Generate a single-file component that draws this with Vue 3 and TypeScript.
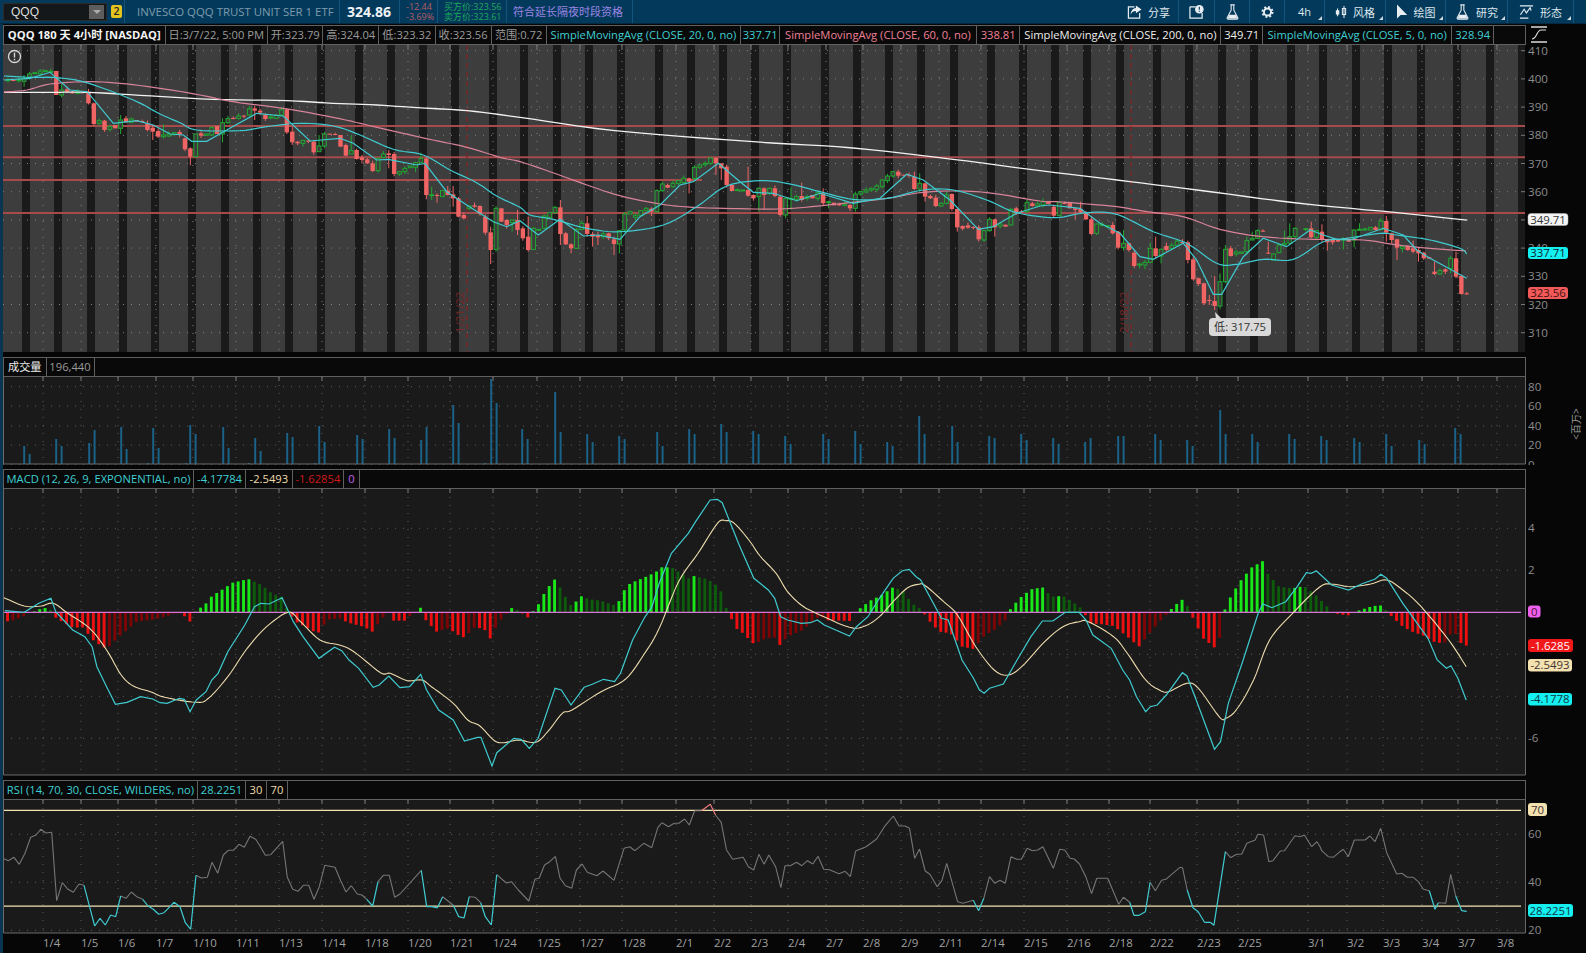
<script setup lang="ts">
type P = [number, number]
type T = { sx: number; ox: number; sy: number; oy: number }

const z7: T = { sx: 1 / 3, ox: 0, sy: 1 / 3, oy: 60 }
const z8: T = { sx: 1 / 3, ox: 520, sy: 1 / 3, oy: 130 }
const z9: T = { sx: 1 / 3, ox: 1030, sy: 1 / 3, oy: 180 }
const z10: T = { sx: 1 / 2.063, ox: 0, sy: 1 / 3, oy: 490 }
const z11: T = { sx: 1 / 2.178, ox: 760, sy: 1 / 3, oy: 490 }
const z5: T = { sx: 1 / 3, ox: 0, sy: 1 / 3, oy: 760 }
const z12: T = { sx: 1 / 1.912, ox: 500, sy: 1 / 3, oy: 795 }
const z6: T = { sx: 1 / 3, ox: 1300, sy: 1 / 3, oy: 600 }

function trace(parts: [number[], T][]): P[] {
  const out: P[] = []
  for (const [a, t] of parts) {
    for (let i = 0; i + 1 < a.length; i += 2) {
      const x = a[i] * t.sx + t.ox
      const y = a[i + 1] * t.sy + t.oy
      if (!out.length || x > out[out.length - 1][0]) out.push([x, y])
    }
  }
  return out
}
const toPts = (p: P[]) => p.map(([x, y]) => `${x.toFixed(1)},${y.toFixed(1)}`).join(' ')

// Catmull-Rom resampling for the slow averages, which are smooth curves on the chart.
function smooth(p: P[]): P[] {
  const out: P[] = []
  for (let i = 0; i < p.length - 1; i++) {
    const a = p[Math.max(i - 1, 0)]
    const b = p[i]
    const c = p[i + 1]
    const d = p[Math.min(i + 2, p.length - 1)]
    for (let s = 0; s < 6; s++) {
      const t = s / 6
      const t2 = t * t
      const t3 = t2 * t
      const f = (k: 0 | 1) =>
        0.5 * (2 * b[k] + (c[k] - a[k]) * t + (2 * a[k] - 5 * b[k] + 4 * c[k] - d[k]) * t2 + (3 * b[k] - a[k] - 3 * c[k] + d[k]) * t3)
      out.push([f(0), f(1)])
    }
  }
  out.push(p[p.length - 1])
  return out
}

function interp(k: P[], x: number): number {
  if (x <= k[0][0]) return k[0][1]
  for (let i = 1; i < k.length; i++) {
    if (x <= k[i][0]) {
      const f = (x - k[i - 1][0]) / (k[i][0] - k[i - 1][0])
      return k[i - 1][1] + f * (k[i][1] - k[i - 1][1])
    }
  }
  return k[k.length - 1][1]
}

const stripes = [22, 54, 87, 119, 151, 188, 221, 253, 285, 317, 355, 387, 419, 451, 489, 520, 553, 585, 617, 655, 687, 719, 751, 783, 821, 853, 885, 917, 950, 987, 1019, 1051, 1083, 1116, 1153, 1185, 1218, 1250, 1287, 1319, 1352, 1384, 1417, 1453, 1486]

const ticks: [number, string][] = [[43, '1/4'], [81, '1/5'], [118, '1/6'], [156, '1/7'], [193, '1/10'], [236, '1/11'], [279, '1/13'], [322, '1/14'], [365, '1/18'], [408, '1/20'], [450, '1/21'], [493, '1/24'], [537, '1/25'], [580, '1/27'], [622, '1/28'], [676, '2/1'], [714, '2/2'], [751, '2/3'], [788, '2/4'], [826, '2/7'], [863, '2/8'], [901, '2/9'], [939, '2/11'], [981, '2/14'], [1024, '2/15'], [1067, '2/16'], [1109, '2/18'], [1150, '2/22'], [1197, '2/23'], [1238, '2/25'], [1308, '3/1'], [1347, '3/2'], [1383, '3/3'], [1422, '3/4'], [1458, '3/7'], [1497, '3/8']]

// ---- price pane ----
const priceY = (p: number) => 50.7 + (410 - p) * 2.82
const priceLabels = [410, 400, 390, 380, 370, 360, 340, 330, 320, 310]
const priceGrid = [410, 400, 390, 380, 370, 360, 350, 340, 330, 320, 310].map(priceY)

const abs: T = { sx: 1, ox: 0, sy: 1, oy: 0 }
const white = trace([[[4, 92.3, 53, 92.3, 87, 92.3, 140, 95.3, 213, 99.3, 287, 100.7, 333, 103.3, 377, 105, 417, 107.7, 467, 110.7, 520, 117.3, 615, 130.7, 753, 141.7, 853, 148, 953, 159.3, 1040, 170.7, 1117, 180, 1197, 190, 1297, 203, 1397, 212.7, 1467, 220.2], abs]])
const pink = trace([[[4, 92, 27, 90, 50, 84, 87, 81.7, 120, 83.3, 160, 88.3, 200, 95, 233, 101.7, 283, 108.3, 333, 117.3, 367, 125, 400, 132.7, 433, 140, 467, 147.3, 500, 157.3, 520, 161.7, 550, 171.7, 587, 185, 620, 195.7, 660, 204, 693, 207.3, 740, 208.7, 787, 208.7, 837, 204, 887, 198.3, 923, 192.3, 960, 191, 993, 193.3, 1040, 201, 1057, 201.7, 1087, 204, 1117, 206.7, 1147, 211.7, 1183, 216.7, 1220, 229.3, 1263, 236.7, 1313, 239.3, 1363, 240, 1397, 245, 1430, 248.3, 1466, 251], abs]])
const sma20 = trace([
  [[12, 48, 90, 52, 170, 53, 260, 68, 400, 120, 480, 162, 540, 188, 590, 210, 720, 212, 800, 200, 900, 190, 1000, 198, 1080, 225, 1180, 268, 1270, 285, 1350, 330, 1430, 368, 1490, 408, 1560, 442], z7],
  [[30, 255, 100, 268, 200, 295, 300, 305, 430, 285, 530, 230, 620, 168, 720, 152, 800, 160, 900, 185, 1000, 208, 1100, 205, 1210, 180, 1300, 180, 1400, 210, 1480, 245, 1560, 260], z8],
  [[90, 112, 170, 98, 260, 103, 370, 155, 470, 190, 560, 250, 620, 253, 700, 238, 790, 238, 880, 185, 950, 175, 1050, 160, 1100, 165, 1200, 180, 1290, 205, 1310, 222], z9],
])
const sma5 = trace([
  [[12, 60, 90, 55, 150, 37, 210, 90, 262, 95, 340, 190, 410, 182, 460, 195, 510, 222, 550, 225, 575, 244, 620, 244, 680, 210, 770, 160, 850, 168, 930, 243, 1020, 235, 1060, 250, 1130, 300, 1165, 298, 1250, 315, 1275, 310, 1340, 395, 1400, 435, 1480, 485, 1520, 500, 1560, 482], z7],
  [[55, 315, 120, 268, 190, 318, 235, 315, 300, 328, 360, 260, 420, 225, 480, 165, 520, 155, 595, 100, 660, 155, 700, 187, 760, 190, 830, 212, 900, 190, 1000, 220, 1080, 205, 1160, 133, 1210, 150, 1290, 210, 1375, 298, 1420, 290, 1490, 250, 1560, 228], z8],
  [[60, 75, 150, 85, 210, 130, 270, 160, 330, 230, 370, 238, 460, 190, 500, 240, 550, 343, 575, 343, 640, 230, 700, 175, 770, 200, 840, 150, 880, 165, 920, 178, 960, 180, 1060, 145, 1120, 165, 1160, 210, 1200, 235, 1250, 262, 1310, 295], z9],
])
const maLines = [
  { pts: toPts(smooth(white)), color: '#f2f2f2', w: 1.3 },
  { pts: toPts(smooth(pink)), color: '#d8839a', w: 1.2 },
  { pts: toPts(smooth(sma20)), color: '#3fcbd0', w: 1.2 },
  { pts: toPts(sma5), color: '#3fcbd0', w: 1.2 },
]

const c7: number[][] = [[24, 60, 59], [40, 60, 60], [56, 60, 59], [74, 64, 56, 45, 80], [90, 52, 42], [106, 41, 38], [122, 41, 33], [138, 33, 32], [154, 36, 34, 26], [170, 33, 105], [186, 105, 90, 72, 112], [202, 88, 95], [218, 97, 99], [234, 100, 96], [250, 95, 96], [266, 95, 130], [282, 130, 192], [298, 190, 182], [314, 182, 210], [330, 208, 200], [346, 195, 205], [362, 205, 180, 165, 222], [378, 175, 187, 168], [394, 187, 177], [410, 180, 185], [426, 183, 186], [442, 190, 210], [458, 203, 215, 195, 240], [474, 213, 230], [490, 230, 225, 193], [506, 228, 222], [522, 223, 218], [538, 216, 225], [554, 235, 268], [570, 265, 290, 262, 316], [586, 290, 222], [602, 220, 227], [618, 226, 222], [634, 225, 203], [650, 198, 222], [666, 222, 188, 175, 247], [682, 188, 176], [698, 174, 176], [714, 175, 168], [730, 167, 169], [746, 165, 147], [762, 145, 152, 138, 180], [778, 152, 158], [795, 163, 177], [812, 174, 171], [830, 175, 166], [846, 165, 150], [862, 148, 217, 146, 222], [878, 215, 247, 200, 255], [894, 245, 250], [910, 250, 241, 240, 260], [926, 242, 244], [942, 245, 277, 240, 284], [958, 275, 258, 225], [974, 258, 222], [990, 221, 223], [1006, 222, 224], [1022, 225, 260], [1038, 255, 287], [1055, 282, 272, 225], [1071, 270, 297], [1087, 292, 300, 285, 310], [1103, 298, 310], [1119, 310, 333], [1135, 332, 295], [1151, 292, 282], [1167, 280, 285, 270, 325], [1183, 282, 342], [1199, 342, 335], [1215, 335, 325], [1231, 323, 318], [1247, 322, 308, 305, 336], [1263, 308, 295, 278], [1280, 295, 405, 292, 418], [1296, 405, 404, 380, 420], [1312, 405, 408, 400, 428], [1328, 410, 392], [1344, 392, 405, 378], [1360, 403, 415, 378, 440], [1376, 415, 470], [1392, 465, 475], [1408, 445, 438], [1424, 436, 440], [1440, 438, 462], [1456, 470, 518], [1472, 517, 570, 500, 612], [1488, 568, 445], [1504, 445, 485], [1520, 480, 495, 478, 506], [1536, 488, 480, 478, 515], [1552, 480, 510, 450, 525]]
const c8: number[][] = [[8, 295, 325], [24, 320, 360, 260, 365], [40, 358, 295], [56, 300, 298], [72, 295, 258], [89, 262, 248], [105, 248, 232], [122, 232, 312, 210, 345], [138, 310, 343], [154, 343, 355, 340, 370], [170, 355, 298], [186, 298, 280], [202, 280, 312, 258, 320], [218, 312, 320, 305, 350], [234, 316, 322, 305, 345], [250, 320, 312], [266, 310, 325], [282, 328, 342, 320, 375], [298, 342, 302, 300, 370], [314, 300, 252], [330, 252, 245], [347, 262, 256], [363, 256, 242], [379, 242, 235], [395, 236, 245, 232, 258], [411, 245, 182], [427, 182, 162], [443, 165, 173], [459, 170, 160], [475, 160, 152], [491, 158, 145], [507, 145, 155, 143, 190], [523, 145, 112], [539, 112, 105], [555, 104, 100], [572, 100, 84], [588, 84, 100, 82, 135], [604, 100, 115, 100, 150], [620, 110, 165], [636, 165, 183], [652, 181, 179], [668, 181, 180], [684, 180, 197, 110, 200], [700, 195, 205, 193, 212], [716, 200, 175, 172, 245], [732, 175, 195, 172, 238], [748, 190, 175], [764, 175, 198], [780, 200, 255], [796, 255, 205, 203, 265], [812, 206, 205, 172, 240], [828, 208, 200], [845, 198, 210, 158, 215], [861, 205, 200], [877, 195, 205], [893, 205, 188], [909, 190, 220, 175, 225], [925, 218, 215, 212, 235], [941, 218, 226], [957, 222, 226], [973, 226, 222], [989, 225, 235, 222, 242], [1005, 235, 192, 185, 245], [1021, 192, 185], [1037, 186, 180], [1053, 180, 175], [1069, 178, 168], [1086, 170, 150], [1102, 152, 138], [1118, 138, 125], [1134, 125, 137], [1150, 134, 136], [1166, 134, 136], [1182, 140, 177, 125, 180], [1198, 177, 160, 130, 185], [1214, 160, 200, 158, 215], [1230, 198, 205], [1246, 203, 228], [1262, 228, 220], [1278, 220, 195], [1294, 192, 237], [1311, 237, 292, 235, 305], [1327, 288, 296], [1343, 286, 293], [1359, 291, 293], [1375, 292, 328], [1391, 330, 302, 300, 335], [1407, 302, 268, 262, 305], [1423, 268, 292, 266, 320], [1439, 288, 282], [1455, 284, 290], [1471, 285, 238], [1487, 235, 248, 230, 255], [1503, 244, 246], [1519, 245, 218], [1535, 220, 228], [1552, 228, 222]]
const c9: number[][] = [[39, 75, 65, 55], [55, 65, 72], [71, 80, 107], [87, 107, 67], [103, 69, 71], [119, 68, 85], [135, 85, 90, 83, 118], [151, 87, 97, 65, 100], [167, 97, 118], [183, 118, 162], [199, 160, 132], [215, 136, 133], [231, 139, 137], [248, 135, 160], [264, 155, 203], [280, 203, 190, 150, 212], [296, 190, 210], [312, 218, 258], [328, 255, 252, 248, 265], [344, 255, 247, 240, 268], [360, 247, 205, 188], [376, 205, 228, 170, 235], [392, 228, 208, 205, 250], [408, 198, 210, 188, 215], [424, 205, 196], [440, 196, 183], [456, 186, 188], [473, 187, 240, 182, 250], [489, 238, 298], [505, 295, 312], [521, 310, 370, 308, 375], [537, 360, 362, 345, 375], [553, 363, 378, 288, 390], [569, 378, 305, 280, 388], [585, 305, 208, 195, 310], [601, 205, 228, 198, 230], [617, 222, 216], [633, 220, 216], [650, 215, 182, 170, 225], [666, 180, 175, 155], [682, 175, 152], [698, 152, 155, 148, 156], [714, 218, 220, 185, 222], [730, 240, 222, 220, 240], [746, 218, 195], [762, 195, 190, 152, 200], [778, 190, 170, 130, 195], [794, 170, 145, 142, 175], [826, 148, 146], [842, 145, 172, 125, 175], [858, 172, 152], [874, 155, 180, 133, 185], [890, 180, 187, 178, 212], [906, 180, 187], [922, 180, 185], [938, 180, 176, 172, 208], [954, 176, 185], [971, 180, 150, 148, 202], [987, 150, 148, 130], [1003, 150, 147], [1019, 150, 142], [1035, 142, 150, 138], [1051, 148, 123], [1067, 123, 158, 108, 185], [1083, 160, 180, 158, 190], [1099, 178, 203, 176, 240], [1115, 205, 200, 198, 218], [1131, 198, 210, 195, 212], [1147, 205, 215, 182, 220], [1163, 210, 220, 205, 245], [1179, 218, 235, 215, 240], [1195, 232, 236], [1211, 275, 282, 245, 285], [1228, 282, 272, 265, 285], [1244, 268, 275, 265, 282], [1260, 265, 235, 228, 280], [1276, 235, 290, 215, 295], [1292, 288, 342, 285, 344], [1308, 340, 343]]

const step = 5.363
const candles = ([[c7, z7], [c8, z8], [c9, z9]] as [number[][], T][]).flatMap(([list, t]) =>
  list.map((r, n) => {
    const raw = r[0] * t.sx + t.ox
    const x = 8 + Math.round((raw - 8) / step) * step
    const o = r[1] * t.sy + t.oy
    const c = r[2] * t.sy + t.oy
    const top = Math.min(o, c)
    const bot = Math.max(o, c)
    const seed = (n * 7 + Math.round(raw)) % 5
    const hi = r[3] !== undefined ? r[3] * t.sy + t.oy : top - seed * 0.7
    const lo = r[4] !== undefined ? r[4] * t.sy + t.oy : bot + ((seed * 3) % 5) * 0.6
    return { x, top, h: Math.max(bot - top, 1), hi, lo, up: c < o }
  }),
)

// ---- volume pane ----
const volPairs = [[18, 10], [25, 18], [21, 34], [37, 15], [36, 16], [39, 30], [37, 16], [26, 13], [31, 27], [38, 22], [29, 25], [35, 26], [24, 37], [59, 41], [85, 61], [35, 25], [72, 32], [30, 22], [28, 25], [32, 18], [35, 30], [40, 32], [33, 30], [28, 20], [30, 25], [33, 20], [22, 18], [48, 30], [38, 22], [28, 26], [30, 24], [26, 20], [22, 26], [28, 28], [30, 24], [24, 18], [54, 30], [30, 22], [30, 25], [28, 24], [26, 22], [30, 18], [24, 20], [36, 30]]
const volBars = volPairs.flatMap((p, i) => [
  { x: stripes[i] + 1.2, h: p[0] },
  { x: stripes[i] + 6.6, h: p[1] },
])
const volTiny = [147, 185, 248, 314, 484]
const volGrid: [number, string][] = [[386.7, '80'], [406, '60'], [426, '40'], [445, '20'], [464.6, '0']]

// ---- MACD pane ----
const macdGrid: [number, string][] = [[528.3, '4'], [570.3, '2'], [654.3, ''], [696.3, ''], [738.3, '-6']]
const macd = trace([
  [[10, 362, 50, 367, 80, 340, 105, 325, 115, 365, 150, 420, 175, 440, 190, 470, 200, 530, 220, 590, 238, 643, 262, 637, 290, 620, 315, 627, 330, 638, 345, 640, 370, 625, 380, 628, 392, 665, 405, 630, 425, 605, 437, 570, 450, 550, 470, 485, 505, 405, 525, 350, 538, 340, 555, 342, 582, 323, 605, 395, 625, 440, 658, 505, 690, 472, 705, 482, 720, 510, 740, 535, 770, 592, 782, 585, 802, 558, 825, 593, 845, 590, 868, 553, 880, 600, 905, 660, 935, 690, 958, 753, 985, 742, 992, 742, 1015, 828, 1025, 788, 1060, 745, 1075, 748, 1092, 775, 1110, 745, 1145, 595, 1158, 600, 1178, 645, 1205, 592, 1222, 583, 1245, 568, 1268, 575, 1280, 550, 1305, 450, 1330, 382, 1345, 350, 1360, 280, 1385, 190, 1420, 130, 1435, 95, 1465, 30, 1480, 28, 1490, 38, 1525, 165, 1555, 265, 1568, 280], z10],
  [[18, 300, 32, 325, 45, 380, 60, 390, 90, 400, 110, 398, 125, 390, 140, 405, 195, 438, 210, 410, 235, 380, 260, 325, 290, 265, 310, 242, 325, 238, 340, 260, 350, 270, 395, 385, 410, 390, 440, 510, 465, 565, 478, 600, 488, 610, 500, 595, 530, 582, 560, 510, 590, 440, 615, 393, 638, 393, 665, 367, 695, 367, 710, 390, 725, 435, 765, 475, 790, 540, 805, 570, 820, 620, 840, 665, 850, 650, 865, 645, 885, 615, 920, 548, 930, 558, 950, 630, 990, 778, 1003, 755, 1020, 640, 1050, 520, 1085, 370, 1095, 342, 1115, 353, 1145, 335, 1170, 290, 1190, 248, 1200, 250, 1212, 243, 1245, 285, 1282, 300, 1310, 282, 1340, 267, 1352, 253, 1365, 265, 1400, 340, 1455, 445, 1475, 510, 1495, 535, 1505, 527, 1520, 565, 1538, 630], z11],
])
const signal = trace([
  [[8, 323, 50, 348, 85, 348, 110, 340, 140, 370, 185, 415, 220, 480, 250, 555, 275, 588, 310, 605, 340, 622, 405, 637, 430, 625, 470, 560, 510, 475, 550, 410, 595, 367, 620, 395, 660, 450, 700, 465, 730, 485, 785, 548, 805, 550, 840, 572, 870, 570, 890, 590, 935, 640, 965, 690, 990, 708, 1020, 752, 1040, 758, 1070, 750, 1105, 757, 1130, 725, 1160, 670, 1180, 660, 1240, 605, 1290, 568, 1330, 490, 1360, 415, 1400, 275, 1440, 190, 1480, 100, 1497, 92, 1515, 100, 1545, 150, 1568, 198], z10],
  [[35, 250, 60, 305, 90, 345, 120, 368, 195, 412, 230, 407, 260, 380, 290, 335, 320, 295, 345, 283, 360, 287, 400, 335, 430, 375, 470, 470, 510, 540, 540, 555, 570, 530, 620, 455, 660, 410, 695, 395, 715, 395, 770, 440, 800, 490, 840, 570, 870, 600, 890, 605, 930, 580, 955, 595, 1000, 680, 1015, 685, 1040, 655, 1075, 570, 1110, 450, 1160, 370, 1220, 290, 1250, 283, 1285, 290, 1330, 282, 1365, 270, 1400, 300, 1440, 350, 1500, 450, 1538, 530], z11],
])
const macdPts = toPts(macd)
const signalPts = toPts(smooth(signal))
const histKnots = trace([
  [[10, 395, 30, 390, 50, 378, 60, 367, 70, 365, 80, 358, 100, 352, 108, 367, 115, 383, 128, 395, 150, 413, 170, 412, 195, 455, 220, 477, 245, 440, 262, 420, 282, 395, 320, 388, 345, 378, 365, 367, 380, 378, 392, 395, 400, 368, 412, 355, 425, 340, 437, 318, 457, 300, 480, 278, 512, 267, 540, 285, 560, 310, 580, 320, 595, 367, 610, 395, 640, 418, 655, 432, 675, 390, 700, 385, 718, 398, 750, 410, 768, 425, 785, 390, 800, 367, 812, 392, 835, 392, 850, 372, 862, 367, 867, 352, 878, 390, 900, 425, 925, 415, 945, 435, 958, 443, 980, 410, 1000, 420, 1012, 447, 1025, 405, 1040, 375, 1050, 367, 1055, 354, 1065, 358, 1075, 367, 1088, 383, 1098, 367, 1110, 345, 1120, 316, 1133, 288, 1145, 267, 1155, 292, 1168, 325, 1178, 347, 1188, 335, 1200, 318, 1215, 328, 1240, 332, 1265, 345, 1277, 333, 1288, 300, 1300, 280, 1330, 262, 1352, 247, 1365, 232, 1385, 232, 1410, 255, 1420, 265, 1432, 258, 1460, 268, 1477, 285, 1490, 310, 1497, 352, 1505, 367, 1510, 392, 1520, 417, 1535, 432, 1552, 460, 1568, 455], z10],
  [[8, 448, 30, 440, 43, 465, 60, 440, 90, 422, 110, 400, 130, 378, 150, 392, 170, 392, 195, 393, 205, 367, 215, 358, 240, 332, 265, 315, 288, 293, 310, 300, 330, 340, 345, 352, 355, 367, 370, 395, 390, 425, 415, 430, 440, 470, 465, 477, 490, 435, 510, 420, 535, 390, 542, 367, 545, 358, 565, 325, 590, 298, 615, 292, 635, 320, 660, 318, 680, 335, 700, 355, 705, 367, 720, 400, 745, 403, 770, 408, 800, 440, 825, 470, 845, 435, 870, 395, 890, 367, 895, 358, 918, 328, 930, 345, 935, 367, 942, 382, 965, 445, 990, 473, 1003, 438, 1005, 367, 1012, 360, 1025, 320, 1045, 275, 1070, 233, 1095, 213, 1105, 250, 1130, 290, 1160, 295, 1185, 288, 1210, 315, 1235, 350, 1240, 367, 1280, 377, 1290, 367, 1303, 362, 1330, 350, 1350, 345, 1365, 362, 1372, 375, 1400, 410, 1420, 425, 1445, 437, 1470, 457, 1490, 460, 1510, 420, 1525, 458, 1540, 468], z11],
])
const zero = 612.3
const hist = (() => {
  const out: { x: number; y: number; h: number; c: string }[] = []
  let prev = 0
  for (let i = 0; i < 273; i++) {
    const x = 7.5 + i * step
    const v = zero - interp(histKnots, x)
    const pos = v > 0
    const bright = pos ? v >= prev : v <= prev
    const c = pos ? (bright ? '#18e818' : '#0c5c0c') : bright ? '#ee1010' : '#7d0505'
    prev = v
    if (Math.abs(v) >= 0.6) out.push({ x: x - 1.4, y: pos ? zero - v : zero, h: Math.abs(v), c })
  }
  return out
})()

// ---- RSI pane ----
const rsi = trace([
  [[12, 296, 25, 302, 42, 292, 58, 313, 75, 280, 92, 232, 108, 225, 122, 208, 138, 219, 155, 217, 170, 422, 187, 368, 204, 388, 220, 397, 237, 372, 252, 376, 268, 437, 284, 498, 300, 475, 316, 495, 332, 465, 347, 470, 362, 408, 378, 415, 394, 396, 410, 410, 428, 418, 444, 438, 460, 448, 476, 463, 492, 458, 510, 440, 522, 427, 540, 440, 556, 488, 572, 508, 588, 346, 604, 354, 622, 352, 636, 307, 653, 340, 670, 285, 685, 271, 700, 271, 717, 253, 733, 262, 750, 229, 767, 238, 780, 258, 796, 286, 812, 284, 848, 244, 862, 352, 878, 388, 894, 394, 910, 376, 926, 376, 942, 418, 958, 380, 974, 316, 1005, 322, 1022, 362, 1038, 396, 1054, 377, 1072, 402, 1086, 405, 1100, 418, 1118, 438, 1134, 365, 1150, 346, 1168, 346, 1184, 412, 1200, 402, 1264, 331, 1280, 440, 1296, 440, 1312, 444, 1328, 410, 1360, 436, 1376, 470, 1392, 474, 1408, 410, 1426, 412, 1442, 428, 1456, 470, 1474, 495, 1490, 344], z5],
  [[12, 264, 22, 260, 35, 285, 55, 318, 67, 252, 75, 250, 85, 210, 95, 200, 106, 184, 115, 250, 125, 272, 137, 280, 146, 225, 157, 207, 167, 232, 185, 242, 197, 228, 218, 256, 237, 160, 248, 155, 258, 167, 275, 145, 290, 158, 302, 97, 310, 83, 322, 95, 333, 85, 342, 85, 353, 72, 362, 90, 372, 47, 385, 47, 402, 28, 412, 60, 423, 82, 433, 165, 445, 193, 465, 187, 475, 215, 485, 225, 495, 178, 505, 208, 514, 180, 527, 215, 537, 278, 545, 212, 555, 212, 567, 202, 577, 212, 588, 197, 598, 207, 608, 184, 619, 223, 630, 224, 648, 236, 660, 229, 670, 245, 680, 168, 700, 155, 720, 132, 735, 95, 752, 63, 763, 93, 775, 93, 783, 100, 793, 190, 802, 162, 813, 228, 822, 238, 836, 275, 845, 257, 854, 205, 875, 320, 885, 325, 905, 316, 915, 347, 925, 310, 936, 245, 946, 265, 956, 256, 966, 265, 977, 185, 988, 193, 997, 193, 1008, 160, 1018, 167, 1028, 165, 1038, 155, 1058, 220, 1070, 163, 1080, 165, 1090, 190, 1098, 192, 1108, 207, 1120, 245, 1131, 296, 1141, 250, 1162, 250, 1183, 328, 1192, 307, 1204, 322, 1212, 361, 1222, 361, 1234, 350, 1243, 262, 1253, 287, 1265, 256, 1273, 253, 1300, 217, 1305, 218, 1314, 285, 1325, 338, 1335, 350, 1347, 382, 1358, 382, 1365, 391, 1387, 170, 1397, 188, 1408, 178, 1418, 178, 1428, 145, 1444, 135, 1449, 118, 1460, 120, 1470, 200, 1478, 197, 1492, 168, 1500, 167, 1520, 122, 1530, 125, 1538, 120, 1552, 155, 1562, 140, 1568, 155], z12],
  [[15, 705, 35, 740, 50, 725, 65, 752, 85, 770, 100, 772, 120, 755, 130, 748, 145, 770, 163, 720, 195, 720, 210, 708, 225, 725, 242, 685, 260, 758, 290, 822, 305, 820, 322, 832, 340, 832, 355, 845, 370, 868, 388, 872, 405, 928, 415, 908, 437, 910, 452, 823, 467, 888, 485, 932, 500, 934], z6],
])
const rsiPaths = (() => {
  let g = ''
  let cy = ''
  let pk = ''
  for (let i = 1; i < rsi.length; i++) {
    const [a, b] = [rsi[i - 1], rsi[i]]
    const seg = `M${a[0].toFixed(1)} ${a[1].toFixed(1)}L${b[0].toFixed(1)} ${b[1].toFixed(1)}`
    if (a[1] > 905.5 || b[1] > 905.5) cy += seg
    else if (a[1] < 810 || b[1] < 810) pk += seg
    else g += seg
  }
  return { g, cy, pk }
})()
const rsiGrid: [number, string][] = [[834.3, '60'], [882.3, '40'], [930.3, '20']]

type Cell = { t: string; w: number; c: string; b?: boolean }
const priceCells: Cell[] = [
  { t: 'QQQ 180 天 4小时 [NASDAQ]', w: 161.5, c: '#f4f4f4', b: true },
  { t: '日:3/7/22, 5:00 PM', w: 102.5, c: '#9a9a9a' },
  { t: '开:323.79', w: 55.4, c: '#9a9a9a' },
  { t: '高:324.04', w: 55.6, c: '#9a9a9a' },
  { t: '低:323.32', w: 56.7, c: '#9a9a9a' },
  { t: '收:323.56', w: 55.9, c: '#9a9a9a' },
  { t: '范围:0.72', w: 55.1, c: '#9a9a9a' },
  { t: 'SimpleMovingAvg (CLOSE, 20, 0, no)', w: 194.7, c: '#3fcfd2' },
  { t: '337.71', w: 38.6, c: '#3fcfd2' },
  { t: 'SimpleMovingAvg (CLOSE, 60, 0, no)', w: 197, c: '#ef8096' },
  { t: '338.81', w: 43.4, c: '#ef8096' },
  { t: 'SimpleMovingAvg (CLOSE, 200, 0, no)', w: 201.1, c: '#ededed' },
  { t: '349.71', w: 41.5, c: '#ededed' },
  { t: 'SimpleMovingAvg (CLOSE, 5, 0, no)', w: 189.4, c: '#3fcfd2' },
  { t: '328.94', w: 41.6, c: '#3fcfd2' },
]
const volCells: Cell[] = [
  { t: '成交量', w: 42.5, c: '#eeeeee' },
  { t: '196,440', w: 48, c: '#9a9a9a' },
]
const macdCells: Cell[] = [
  { t: 'MACD (12, 26, 9, EXPONENTIAL, no)', w: 190, c: '#3fcfd2' },
  { t: '-4.17784', w: 52, c: '#3fcfd2' },
  { t: '-2.5493', w: 46.7, c: '#efdcaa' },
  { t: '-1.62854', w: 51.3, c: '#d01818' },
  { t: '0', w: 15.7, c: '#c060ee' },
]
const rsiCells: Cell[] = [
  { t: 'RSI (14, 70, 30, CLOSE, WILDERS, no)', w: 194, c: '#3fcfd2' },
  { t: '28.2251', w: 48, c: '#3fcfd2' },
  { t: '30', w: 21, c: '#efdcaa' },
  { t: '70', w: 21, c: '#efdcaa' },
]

const tools = [
  { k: 'share', w: 60, l: '分享', corner: false },
  { k: 'clip', w: 36, l: '', corner: false },
  { k: 'flask', w: 35, l: '', corner: false },
  { k: 'gear', w: 35, l: '', corner: false },
  { k: 'tf', w: 40, l: '4h', corner: true },
  { k: 'candle', w: 61, l: '风格', corner: true },
  { k: 'arrow', w: 60, l: '绘图', corner: true },
  { k: 'flask', w: 62, l: '研究', corner: true },
  { k: 'pattern', w: 66, l: '形态', corner: true },
]
</script>

<template>
  <div class="app">
    <header class="topbar">
      <div class="tb-symbol">
        <div class="symbol-box">
          <span class="symbol-text">QQQ</span>
          <span class="symbol-drop"><i></i></span>
        </div>
        <span class="badge">2</span>
      </div>
      <div class="tb-name">INVESCO QQQ TRUST UNIT SER 1 ETF</div>
      <div class="tb-last">324.86</div>
      <div class="tb-change"><span>-12.44</span><span>-3.69%</span></div>
      <div class="tb-bid"><span>买方价:323.56</span><span>卖方价:323.61</span></div>
      <div class="tb-note">符合延长隔夜时段资格</div>
      <div class="tb-space"></div>
      <div
        v-for="(tool, i) in tools"
        :key="i"
        class="tool"
        :class="{ corner: tool.corner }"
        :style="{ width: tool.w + 'px' }"
      >
        <svg v-if="tool.k === 'share'" class="ic" viewBox="0 0 16 16">
          <path d="M8 2.5H1.5v12h12V9" fill="none" stroke="#e8eef2" stroke-width="1.3" />
          <path d="M9.5 1l6 4.2-6 4.2V7C7 7 5 8 3.8 11 4 7 6 4 9.5 3.6z" fill="#e8eef2" />
        </svg>
        <svg v-else-if="tool.k === 'clip'" class="ic" viewBox="0 0 16 16">
          <path d="M1 2.5h6M1 2.5v12h13V9" fill="none" stroke="#e8eef2" stroke-width="1.3" />
          <circle cx="11" cy="5" r="4.6" fill="#e8eef2" />
          <path d="M11 2.4v3.2M11 6.6v1.2" stroke="#033a5c" stroke-width="1.2" />
        </svg>
        <svg v-else-if="tool.k === 'flask'" class="ic" viewBox="0 0 16 18">
          <path d="M5.5 1h5M6.5 1v6L2 15.5c-.3.8.2 1.5 1 1.5h10c.8 0 1.3-.7 1-1.5L9.5 7V1" fill="none" stroke="#e8eef2" stroke-width="1.2" />
          <path d="M4.3 12h7.4l2 4.2H2.4z" fill="#e8eef2" />
        </svg>
        <svg v-else-if="tool.k === 'gear'" class="ic ic-g" viewBox="0 0 16 16">
          <circle cx="8" cy="8" r="4.4" fill="none" stroke="#e8eef2" stroke-width="2.4" />
          <circle cx="8" cy="8" r="6.3" fill="none" stroke="#e8eef2" stroke-width="2.2" stroke-dasharray="2.4 2.55" />
        </svg>
        <svg v-else-if="tool.k === 'candle'" class="ic ic-s" viewBox="0 0 14 16">
          <path d="M3 4v9M10.5 1v14" stroke="#e8eef2" stroke-width="1.2" />
          <rect x="1" y="6" width="4" height="5" fill="#e8eef2" />
          <rect x="8.6" y="4" width="3.8" height="7" fill="none" stroke="#e8eef2" stroke-width="1.2" />
        </svg>
        <svg v-else-if="tool.k === 'arrow'" class="ic ic-s" viewBox="0 0 12 16">
          <path d="M1 .5v14l3.6-3.4h6.6z" fill="#e8eef2" />
        </svg>
        <svg v-else-if="tool.k === 'pattern'" class="ic" viewBox="0 0 16 16">
          <path d="M1 1.5h14M1 14.5h9" stroke="#e8eef2" stroke-width="1.3" />
          <path d="M1.5 11l4-6 2.4 4 4-5.5 1 3" fill="none" stroke="#e8eef2" stroke-width="1.2" />
        </svg>
        <span v-if="tool.l" class="tool-label">{{ tool.l }}</span>
      </div>
    </header>

    <main class="charts">
      <!-- price -->
      <section class="pane">
        <div class="legend-row">
          <div class="legend">
            <span v-for="c in priceCells" :key="c.t" class="cell" :class="{ bold: c.b }" :style="{ width: c.w + 'px', color: c.c }">{{ c.t }}</span>
          </div>
          <svg class="axis-icon" viewBox="0 0 16 17">
            <path d="M0 1h16M0 16h16" stroke="#dcdcdc" stroke-width="1.3" />
            <path d="M1 13c5 0 4.5-9 9-9h5" fill="none" stroke="#dcdcdc" stroke-width="1.2" />
          </svg>
        </div>
        <svg class="plot plot-price" viewBox="0 45 1583 308" width="1583" height="308">
          <rect x="0" y="45" width="1522" height="307" fill="#3d3d3d" />
          <rect x="1515" y="45" width="7" height="307" fill="#1a1a1a" />
          <rect v-for="s in stripes" :key="s" :x="s - 3" y="45" width="8" height="307" fill="#1a1a1a" />
          <line v-for="[t] in ticks" :key="t" :x1="t - 3" :x2="t - 3" y1="45" y2="352" class="dots-light" />
          <line v-for="t in ticks" :key="'k' + t[0]" :x1="t[0] - 3" :x2="t[0] - 3" y1="45" y2="50" class="tick" />
          <line v-for="y in priceGrid" :key="y" x1="0" x2="1515" :y1="y" :y2="y" class="dots-light" />
          <line v-for="y in priceGrid" :key="'t' + y" x1="1518" x2="1522" :y1="y" :y2="y" class="tick" />

          <line x1="0" x2="1522" y1="126" y2="126" class="level" />
          <line x1="0" x2="1522" y1="157.2" y2="157.2" class="level" />
          <line x1="0" x2="699" y1="180" y2="180" class="level" />
          <line x1="0" x2="1522" y1="213" y2="213" class="level" />

          <line x1="464" x2="464" y1="45" y2="352" class="event" />
          <line x1="1128" x2="1128" y1="45" y2="352" class="event" />
          <text class="event-text" transform="translate(461 333) rotate(-90)">1/21/22</text>
          <text class="event-text" transform="translate(1125 333) rotate(-90)">2/18/22</text>

          <g v-for="(c, i) in candles" :key="i" transform="translate(-3 0)">
            <line :x1="c.x" :x2="c.x" :y1="c.hi" :y2="c.lo" :stroke="c.up ? '#1fa830' : '#f06464'" stroke-width="1" />
            <rect v-if="c.up" :x="c.x - 1.9" :y="c.top" width="3.8" :height="c.h" fill="#3d3d3d" stroke="#1fa830" stroke-width="1" />
            <rect v-else :x="c.x - 2.2" :y="c.top" width="4.4" :height="c.h" fill="#f06464" />
          </g>
          <g transform="translate(-3 0)">
            <polyline v-for="(m, i) in maLines" :key="i" :points="m.pts" fill="none" :stroke="m.color" :stroke-width="m.w" />
          </g>

          <circle cx="11.5" cy="56.5" r="6" fill="#333" stroke="#d8d8d8" stroke-width="1.3" />
          <path d="M11.5 52.5v5M11.5 58.8v1.5" stroke="#d8d8d8" stroke-width="1.4" />

          <path d="M1212 312l7 7h-6z" fill="#d9d9d9" />
          <rect x="1206" y="318" width="62" height="18" rx="4" fill="#d9d9d9" />
          <text x="1237" y="331" class="bubble">低: 317.75</text>

          <text v-for="p in priceLabels" :key="p" x="1525" :y="priceY(p) + 4" class="axis-text">{{ p }}</text>

          <rect x="1525" y="213.5" width="40" height="12" rx="3" fill="#f4f4f4" stroke="#bbb" stroke-width="0.5" />
          <text x="1545" y="223.8" class="pill" fill="#333">349.71</text>
          <rect x="1525" y="247" width="40" height="12" rx="3" fill="#14f0f0" />
          <text x="1545" y="257.3" class="pill" fill="#123">337.71</text>
          <rect x="1525" y="287" width="40" height="12" rx="3" fill="#f25a5a" />
          <text x="1545" y="297.3" class="pill" fill="#411">323.56</text>
        </svg>
      </section>

      <!-- volume -->
      <section class="pane">
        <div class="legend-row">
          <div class="legend">
            <span v-for="c in volCells" :key="c.t" class="cell" :style="{ width: c.w + 'px', color: c.c }">{{ c.t }}</span>
          </div>
        </div>
        <svg class="plot" viewBox="3 377 1583 88" width="1583" height="88">
          <rect x="3" y="377" width="1522" height="87" fill="#1a1a1a" />
          <line v-for="[t] in ticks" :key="t" :x1="t" :x2="t" y1="377" y2="464" class="dots" />
          <line v-for="t in ticks" :key="'k' + t[0]" :x1="t[0]" :x2="t[0]" y1="377" y2="381" class="tick" />
          <line v-for="g in volGrid" :key="g[0]" x1="3" x2="1518" :y1="g[0]" :y2="g[0]" class="dots" />
          <rect v-for="(b, i) in volBars" :key="i" :x="b.x" :y="464 - b.h" width="2" :height="b.h" fill="#1a6287" />
          <rect v-for="x in volTiny" :key="x" :x="x" y="463" width="2" height="1" fill="#1a6287" />
          <text v-for="g in volGrid" :key="'l' + g[0]" x="1528" :y="g[0] + 4" class="axis-text">{{ g[1] }}</text>
          <text class="axis-small" transform="translate(1580 424) rotate(-90)">&lt;百万&gt;</text>
          <path d="M3.5 377v87h1522v-87" class="frame" />
        </svg>
      </section>

      <!-- MACD -->
      <section class="pane">
        <div class="legend-row">
          <div class="legend">
            <span v-for="c in macdCells" :key="c.t" class="cell" :style="{ width: c.w + 'px', color: c.c }">{{ c.t }}</span>
          </div>
        </div>
        <svg class="plot" viewBox="3 489 1583 287" width="1583" height="287">
          <rect x="3" y="489" width="1522" height="286" fill="#1a1a1a" />
          <line v-for="[t] in ticks" :key="t" :x1="t" :x2="t" y1="489" y2="775" class="dots" />
          <line v-for="t in ticks" :key="'k' + t[0]" :x1="t[0]" :x2="t[0]" y1="489" y2="493" class="tick" />
          <line v-for="g in macdGrid" :key="g[0]" x1="3" x2="1518" :y1="g[0]" :y2="g[0]" class="dots" />
          <rect v-for="(b, i) in hist" :key="i" :x="b.x" :y="b.y" width="2.9" :height="b.h" :fill="b.c" />
          <line x1="3" x2="1521" :y1="zero" :y2="zero" stroke="#d873d8" stroke-width="1.3" />
          <polyline :points="signalPts" fill="none" stroke="#eedcae" stroke-width="1.1" />
          <polyline :points="macdPts" fill="none" stroke="#3fcbd0" stroke-width="1.2" />
          <text v-for="g in macdGrid" :key="'l' + g[0]" x="1528" :y="g[0] + 4" class="axis-text">{{ g[1] }}</text>
          <rect x="1528" y="605.5" width="12.5" height="12" rx="3" fill="#ee60ee" />
          <text x="1534.2" y="615.8" class="pill" fill="#513">0</text>
          <rect x="1528" y="639" width="45" height="13" rx="3" fill="#f01818" />
          <text x="1550.5" y="649.6" class="pill" fill="#fff">-1.6285</text>
          <rect x="1528" y="659" width="44" height="12.5" rx="3" fill="#f3e1b0" />
          <text x="1550" y="669.3" class="pill" fill="#433">-2.5493</text>
          <rect x="1528" y="693" width="44" height="12.5" rx="3" fill="#14f0f0" />
          <text x="1550" y="703.4" class="pill" fill="#134">-4.1778</text>
          <path d="M3.5 489v286h1522v-286" class="frame" />
        </svg>
      </section>

      <!-- RSI -->
      <section class="pane">
        <div class="legend-row">
          <div class="legend">
            <span v-for="c in rsiCells" :key="c.t" class="cell" :style="{ width: c.w + 'px', color: c.c }">{{ c.t }}</span>
          </div>
        </div>
        <svg class="plot" viewBox="3 800 1583 134" width="1583" height="134">
          <rect x="3" y="800" width="1522" height="133" fill="#1a1a1a" />
          <line v-for="[t] in ticks" :key="t" :x1="t" :x2="t" y1="800" y2="933" class="dots" />
          <line v-for="t in ticks" :key="'k' + t[0]" :x1="t[0]" :x2="t[0]" y1="800" y2="804" class="tick" />
          <line v-for="g in rsiGrid" :key="g[0]" x1="3" x2="1518" :y1="g[0]" :y2="g[0]" class="dots" />
          <line x1="3" x2="1521" y1="810.3" y2="810.3" stroke="#f3e3b4" stroke-width="1.3" />
          <line x1="3" x2="1521" y1="906.2" y2="906.2" stroke="#f3e3b4" stroke-width="1.3" />
          <path :d="rsiPaths.g" fill="none" stroke="#767676" stroke-width="1.1" />
          <path :d="rsiPaths.cy" fill="none" stroke="#3fcbd0" stroke-width="1.2" />
          <path :d="rsiPaths.pk" fill="none" stroke="#ec7b7b" stroke-width="1.2" />
          <text v-for="g in rsiGrid" :key="'l' + g[0]" x="1528" :y="g[0] + 4" class="axis-text">{{ g[1] }}</text>
          <rect x="1528" y="803" width="19" height="13" rx="3" fill="#f3e1b0" />
          <text x="1537.5" y="813.6" class="pill" fill="#433">70</text>
          <rect x="1528" y="904" width="45" height="13" rx="3" fill="#14f0f0" />
          <text x="1550.5" y="914.6" class="pill" fill="#134">28.2251</text>
          <path d="M3.5 800v133h1522v-133" class="frame" />
        </svg>
      </section>

      <svg class="time-axis" viewBox="3 934 1583 19" width="1583" height="19">
        <text v-for="[x, l] in ticks" :key="l" :x="x" y="947" class="time-text">{{ l }}</text>
      </svg>
    </main>
  </div>
</template>

<style scoped>
.app {
  width: 1586px;
  height: 953px;
  overflow: hidden;
  background: #060606;
  font-family: "Open Sans", "Noto Sans CJK SC", sans-serif;
}
.topbar {
  height: 24px;
  display: flex;
  align-items: center;
  background: #033a5c;
  color: #e8eef2;
  font-size: 11px;
  padding: 0 12px 0 3px;
  box-sizing: border-box;
  border-bottom: 1px solid #02293f;
}
.tb-symbol {
  width: 122px;
  display: flex;
  align-items: center;
  gap: 4px;
  height: 100%;
  border-right: 1px solid #12557c;
  box-sizing: border-box;
}
.symbol-box {
  width: 104px;
  height: 18px;
  background: #14181b;
  border: 1px solid #2b2b2b;
  box-sizing: border-box;
  display: flex;
  align-items: center;
  justify-content: space-between;
  padding-left: 7px;
}
.symbol-text {
  font-family: "Liberation Sans", sans-serif;
  font-size: 12px;
  color: #dedede;
}
.symbol-drop {
  width: 15px;
  height: 14px;
  margin-right: 2px;
  background: #5d5d5d;
  display: flex;
  align-items: center;
  justify-content: center;
}
.symbol-drop i {
  width: 0;
  height: 0;
  border-left: 4px solid transparent;
  border-right: 4px solid transparent;
  border-top: 4px solid #aaa;
}
.badge {
  width: 11px;
  height: 13px;
  background: #e3c41f;
  color: #222;
  border-radius: 2px;
  font-size: 10.5px;
  font-weight: 600;
  text-align: center;
  line-height: 13px;
}
.tb-name {
  width: 215px;
  height: 100%;
  padding-left: 12px;
  box-sizing: border-box;
  line-height: 23px;
  color: #7f9aac;
  font-size: 11.4px;
  white-space: nowrap;
  border-right: 1px solid #12557c;
}
.tb-last {
  width: 60px;
  height: 100%;
  padding-left: 7px;
  box-sizing: border-box;
  line-height: 23px;
  font-weight: 700;
  font-size: 14px;
  color: #eef2f5;
  border-right: 1px solid #12557c;
}
.tb-change,
.tb-bid {
  height: 100%;
  display: flex;
  flex-direction: column;
  justify-content: center;
  font-size: 9px;
  line-height: 9.5px;
  box-sizing: border-box;
  white-space: nowrap;
}
.tb-change {
  width: 38px;
  padding-left: 6px;
  color: #b85a62;
  border-right: 1px solid #12557c;
}
.tb-bid {
  width: 69px;
  padding-left: 6px;
  color: #1fa85a;
  border-right: 1px solid #12557c;
}
.tb-note {
  width: 126px;
  height: 100%;
  padding-left: 6px;
  box-sizing: border-box;
  line-height: 23px;
  color: #9c84e4;
  font-size: 11px;
  white-space: nowrap;
  border-right: 1px solid #12557c;
}
.tb-space {
  flex: 1;
}
.tool {
  position: relative;
  height: 100%;
  display: flex;
  align-items: center;
  justify-content: center;
  gap: 6px;
  box-sizing: border-box;
  border-right: 1px solid #12557c;
  color: #dfe7ec;
  font-size: 11px;
}
.tool.corner::after {
  content: "";
  position: absolute;
  right: 2px;
  bottom: 3px;
  width: 0;
  height: 0;
  border-left: 4px solid transparent;
  border-bottom: 4px solid #cdd8df;
}
.ic {
  width: 15px;
  height: 16px;
}
.ic-s {
  width: 12px;
}
.ic-g {
  width: 13px;
  height: 14px;
}
.tool-label {
  white-space: nowrap;
}
.charts {
  display: flex;
  flex-direction: column;
  gap: 4px;
  padding-left: 3px;
  padding-top: 1px;
  background: linear-gradient(#0a3450, #0a3450) 0 0 / 3px 100% no-repeat;
}
.pane {
  display: flex;
  flex-direction: column;
  width: 1583px;
}
.legend-row {
  height: 20px;
  display: flex;
  align-items: stretch;
}
.legend {
  width: 1523px;
  box-sizing: border-box;
  background: #090909;
  border: 1px solid #606060;
  display: flex;
  flex: none;
}
.cell {
  flex: none;
  box-sizing: border-box;
  border-right: 1px solid #606060;
  font-size: 11.2px;
  line-height: 18px;
  text-align: center;
  white-space: nowrap;
  overflow: hidden;
}
.cell.bold {
  font-weight: 700;
}
.axis-icon {
  width: 16px;
  height: 17px;
  margin-left: 5px;
  margin-top: 1px;
}
.plot {
  display: block;
}
.time-axis {
  display: block;
  margin-top: -4px;
}
.dots {
  stroke: #5c5c5c;
  stroke-width: 1;
  stroke-dasharray: 1 7;
}
.dots-light {
  stroke: #808080;
  stroke-width: 1;
  stroke-dasharray: 1 7;
}
.tick {
  stroke: #7a7a7a;
  stroke-width: 1;
}
.level {
  stroke: #a64a4c;
  stroke-width: 2;
}
.event {
  stroke: #7c2626;
  stroke-width: 1.4;
  stroke-dasharray: 5 4;
}
.event-text {
  fill: #7c2626;
  font-size: 11.5px;
}
.frame {
  fill: none;
  stroke: #6a6a6a;
  stroke-width: 1;
}
.axis-text {
  fill: #8c8c8c;
  font-size: 11.6px;
}
.axis-small {
  fill: #9a9a9a;
  font-size: 10px;
  text-anchor: middle;
}
.pill {
  font-size: 11.4px;
  text-anchor: middle;
}
.bubble {
  font-size: 11.2px;
  text-anchor: middle;
  fill: #333;
}
.time-text {
  fill: #a0a0a0;
  font-size: 11.4px;
}
</style>

<style>
html,
body {
  margin: 0;
  background: #060606;
}
</style>
